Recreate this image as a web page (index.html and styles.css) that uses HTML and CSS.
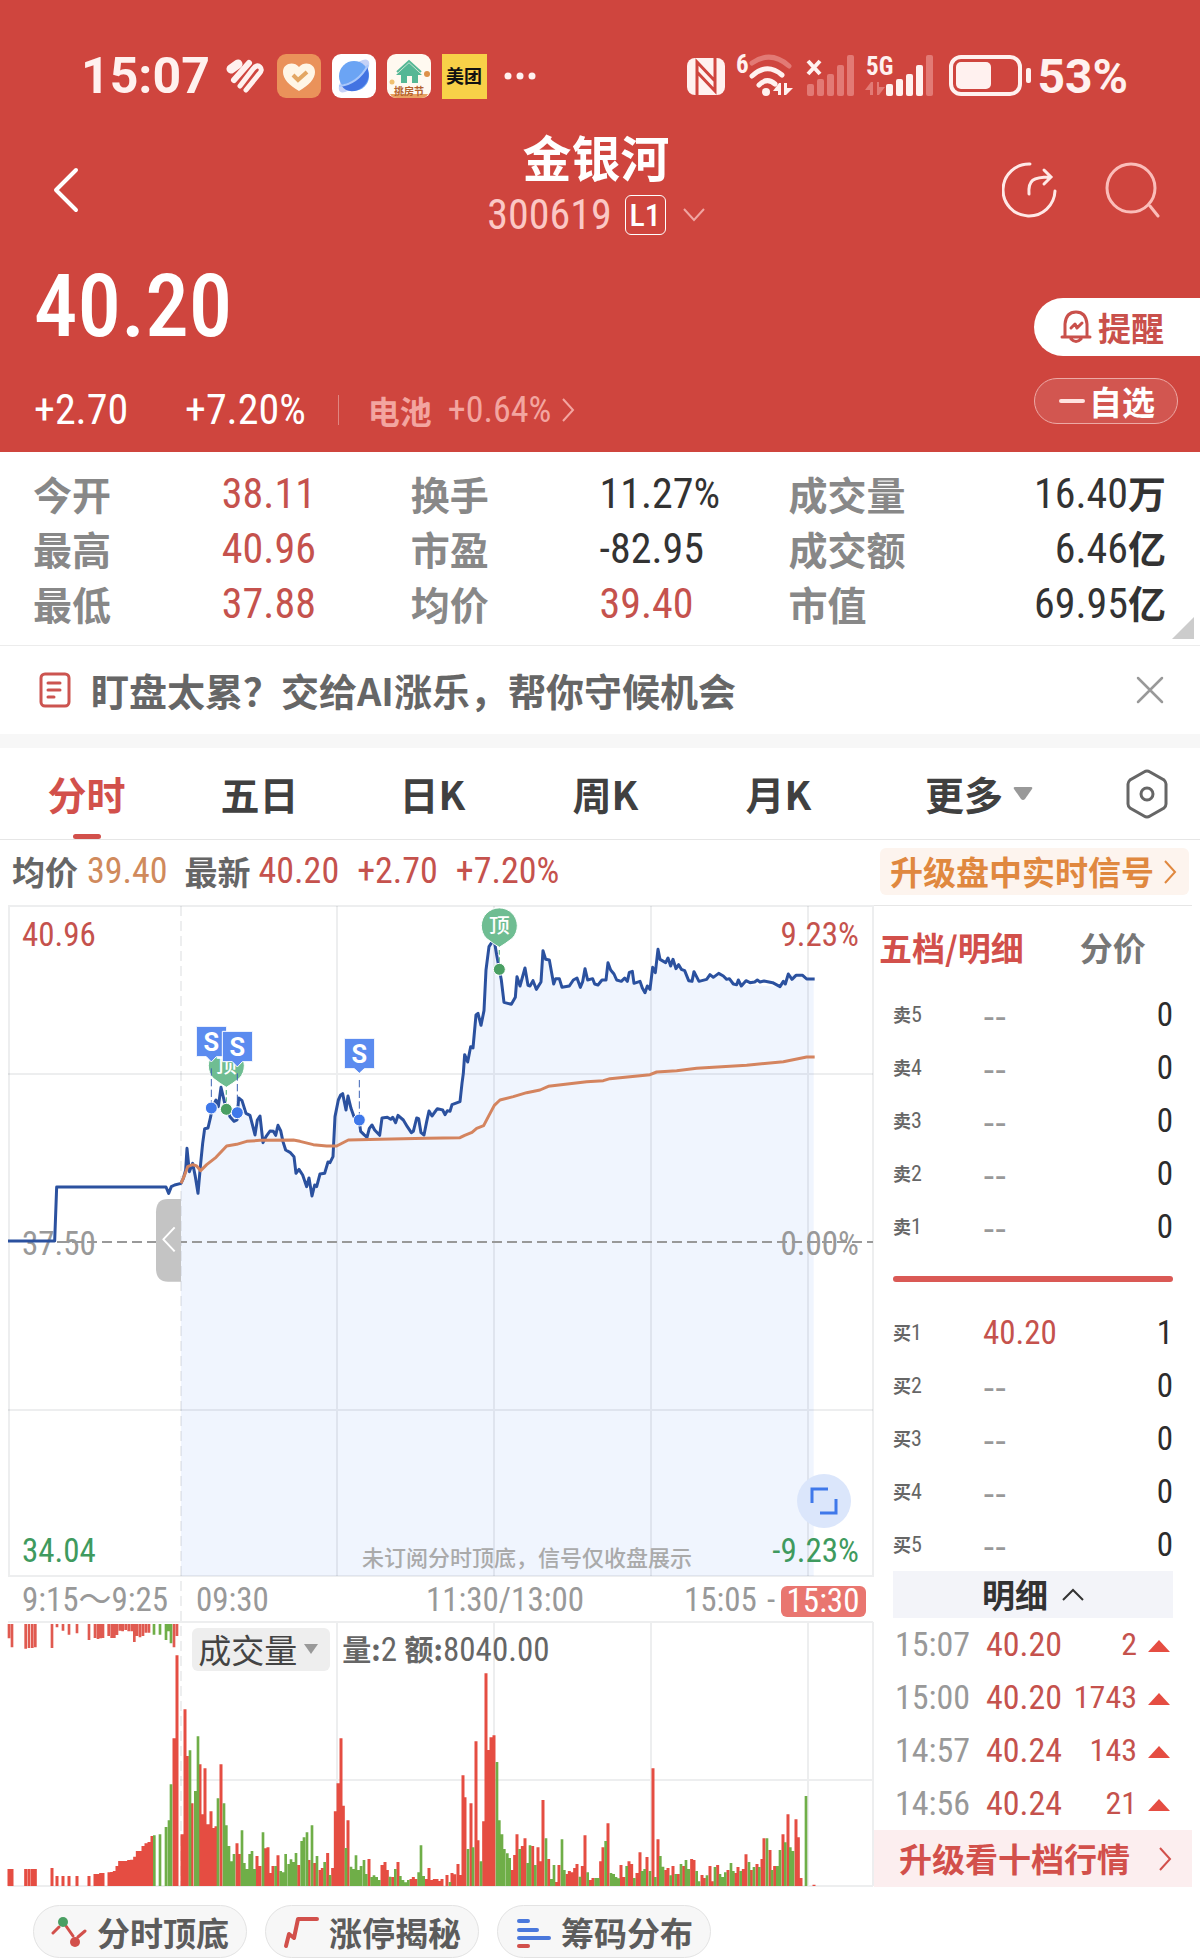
FILE: index.html
```html
<!DOCTYPE html>
<html lang="zh-CN">
<head>
<meta charset="utf-8">
<meta name="viewport" content="width=device-width, initial-scale=1">
<title>金银河 300619</title>
<link rel="stylesheet" href="styles.css">
</head>
<body>
<header class="hero">
  <div class="status">
    <span class="clock">15:07</span>
    <svg class="s-heart" width="40" height="45" viewBox="0 0 40 45" fill="none" stroke="#fff1ef" stroke-linecap="round"><path d="M5 15L12 10" stroke-width="9"/><path d="M8 26L23 9" stroke-width="6"/><path d="M14 32L27 15Q31 10 34 13Q37 16 33 20L20 36" stroke-width="5"/></svg>
    <svg class="s-app" width="44" height="45" viewBox="0 0 44 45"><rect width="44" height="44" rx="9" fill="#ea925a"/><path d="M22 37C12 31 6 25 6 18C6 9 17 7 22 13C27 7 38 9 38 18C38 25 32 31 22 37Z" fill="#fff6e6"/><path d="M16 21L21 26L30 18" fill="none" stroke="#e3a763" stroke-width="4"/></svg>
    <svg class="s-app" width="44" height="45" viewBox="0 0 44 45"><rect width="44" height="44" rx="9" fill="#fff"/><ellipse cx="22" cy="22" rx="21" ry="8" fill="#c5d2f7" transform="rotate(-48 22 22)"/><circle cx="22" cy="22" r="15" fill="#6ba4f4"/><path d="M9 31Q28 27 35 12Q41 28 26 36Q15 40 9 31Z" fill="#4273e2"/><path d="M7 32Q26 30 36 11" stroke="#a9c8fb" stroke-width="2" fill="none"/></svg>
    <svg class="s-app" width="44" height="45" viewBox="0 0 44 45"><rect width="44" height="44" rx="9" fill="#fff9f0"/><path d="M3 40H41Q39 44 34 44H10Q5 44 3 40Z" fill="#e8a060"/><path d="M22 9L35 21H31V29H25V22H20V29H14V21H9Z" fill="#55b795"/><path d="M10 18L22 7L34 18" fill="none" stroke="#55b795" stroke-width="2"/><circle cx="40" cy="20" r="3" fill="#de9149"/><circle cx="5" cy="28" r="2.500" fill="#f0c070"/><text x="22" y="41" text-anchor="middle" class="tiny-label" fill="#b4622f">挑房节</text></svg>
    <svg class="s-app" width="45" height="45" viewBox="0 0 45 45"><rect width="45" height="45" fill="#f8d148"/><text x="22" y="29" text-anchor="middle" class="app-label">美团</text></svg>
    <svg class="s-dots" width="34" height="45" viewBox="0 0 34 45" fill="#fff1ef"><circle cx="5" cy="22" r="3.500"/><circle cx="17" cy="22" r="3.500"/><circle cx="29" cy="22" r="3.500"/></svg>
    <svg class="s-radio" width="346" height="61" viewBox="689 46 346 61" fill="#fff1ef">
      <rect x="689" y="58" width="38" height="37" rx="8"/>
      <path d="M699 95V62L717 81V72M717 58V91L699 72V81" fill="none" stroke="#cf453e" stroke-width="3"/>
      <text x="738" y="73" class="radio-label">6</text>
      <g fill="none" stroke="#fff1ef" stroke-width="5" stroke-linecap="round"><path d="M754 63Q773 50 791 66" stroke="#e27a75"/><path d="M754 76Q769 62 784 75"/><path d="M761 85Q769 77 777 84"/></g>
      <circle cx="768" cy="92" r="4"/><path d="M775 91L781 83H783V95H780V91ZM786 83H789V88L795 88L788 95H786Z"/>
      <path d="M810 61L822 74M822 61L810 74" stroke="#fff1ef" stroke-width="4"/>
      <g fill="#e27a75"><rect x="809" y="84" width="7" height="12" rx="2"/><rect x="819" y="79" width="7" height="17" rx="2"/><rect x="829" y="74" width="7" height="22" rx="2"/><rect x="839" y="65" width="7" height="31" rx="2"/><rect x="849" y="55" width="7" height="41" rx="2"/><path d="M867 90L873 82H875V95H872V90ZM879 82H881V87H887L881 95H879Z"/><rect x="928" y="55" width="7" height="41" rx="2"/></g>
      <text x="868" y="75" class="radio-label">5G</text>
      <rect x="888" y="84" width="7" height="12" rx="2"/><rect x="898" y="79" width="7" height="17" rx="2"/><rect x="908" y="74" width="7" height="22" rx="2"/><rect x="918" y="65" width="7" height="31" rx="2"/>
      <rect x="953" y="57" width="69" height="37" rx="10" fill="none" stroke="#fff1ef" stroke-width="4"/><rect x="958" y="62" width="35" height="27" rx="5"/><rect x="1028" y="68" width="5" height="15" rx="2"/>
    </svg>
    <span class="battery">53%</span>
  </div>

  <nav class="nav">
    <button class="back" aria-label="返回"><svg width="44" height="56" viewBox="0 0 44 56" fill="none" stroke="#fff" stroke-width="4" stroke-linecap="round" stroke-linejoin="round"><path d="M32 8L12 28L32 48"/></svg></button>
    <div class="title">
      <h1>金银河</h1>
      <div class="code"><span>300619</span><span class="level">L1</span><svg width="22" height="14" viewBox="0 0 22 14" fill="none" stroke="#f0a5a1" stroke-width="2"><path d="M1 1L11 12L21 1"/></svg></div>
    </div>
    <div class="nav-actions">
      <button aria-label="分享"><svg width="56" height="60" viewBox="0 0 56 60" fill="none" stroke="#ffe9e7" stroke-width="3" stroke-linecap="round"><path d="M28 4A26 26 0 1 0 53 31"/><path d="M27 34C26 20 31 17 48 17M42 10L49 17L42 24"/></svg></button>
      <button aria-label="搜索"><svg width="56" height="60" viewBox="0 0 56 60" fill="none" stroke="#fbbdb9" stroke-width="3" stroke-linecap="round"><circle cx="27" cy="28" r="24"/><path d="M46 46L54 56"/></svg></button>
    </div>
  </nav>

  <section class="quote">
    <div>
      <div class="price">40.20</div>
      <div class="change">
        <span class="delta">+2.70</span><span>+7.20%</span>
        <a class="sector" href="#"><b>电池</b><span>+0.64%</span><svg width="14" height="26" viewBox="0 0 14 26" fill="none" stroke="#f3a5a0" stroke-width="2"><path d="M2 2L12 13L2 24"/></svg></a>
      </div>
    </div>
    <div class="quote-actions">
      <button class="remind"><svg width="32" height="36" viewBox="0 0 32 36" fill="none" stroke="#c9504b" stroke-width="3" stroke-linecap="round" stroke-linejoin="round"><path d="M2 28H30M5 28V15Q6 3 16 3Q26 3 27 15V28M11 30Q16 35 21 30"/><path d="M11 19L15 15L17 19L22 14"/></svg>提醒</button>
      <button class="watch"><svg width="26" height="4" viewBox="0 0 26 4"><rect width="26" height="4" rx="2" fill="#ffe3e0"/></svg>自选</button>
    </div>
  </section>
</header>

<section class="stats">
  <table>
    <colgroup><col class="c1"><col class="c2"><col class="c3"><col class="c4"><col class="c5"><col></colgroup>
    <tr><th>今开</th><td class="up">38.11</td><th>换手</th><td>11.27%</td><th>成交量</th><td class="end">16.40<b>万</b></td></tr>
    <tr><th>最高</th><td class="up">40.96</td><th>市盈</th><td>-82.95</td><th>成交额</th><td class="end">6.46<b>亿</b></td></tr>
    <tr><th>最低</th><td class="up">37.88</td><th>均价</th><td class="up">39.40</td><th>市值</th><td class="end">69.95<b>亿</b></td></tr>
  </table>
  <i class="corner"></i>
</section>

<aside class="notice">
  <svg width="32" height="36" viewBox="0 0 32 36" fill="none" stroke="#cc5450" stroke-width="3" stroke-linecap="round"><rect x="2" y="2" width="28" height="32" rx="4"/><path d="M9 11H21M9 18H21M9 25H15"/></svg>
  <p>盯盘太累？交给AI涨乐，帮你守候机会</p>
  <button aria-label="关闭"><svg width="28" height="28" viewBox="0 0 28 28" stroke="#999" stroke-width="2.500" stroke-linecap="round"><path d="M2 2L26 26M26 2L2 26"/></svg></button>
</aside>

<nav class="tabs">
  <button class="active">分时</button><button>五日</button><button>日K</button><button>周K</button><button>月K</button>
  <button>更多<svg width="20" height="14" viewBox="0 0 20 14"><path d="M2 0H18Q20 0 19 2L12 12Q10 14 8 12L1 2Q0 0 2 0Z" fill="#999"/></svg></button>
  <button aria-label="设置"><svg width="42" height="50" viewBox="0 0 42 50" fill="none" stroke="#666" stroke-width="3"><path d="M18 3Q21 1 24 3L38 11Q40 13 40 15V35Q40 37 38 39L24 47Q21 49 18 47L4 39Q2 37 2 35V15Q2 13 4 11Z"/><circle cx="21" cy="25" r="6"/></svg></button>
</nav>

<section class="info">
  <p><b>均价</b><span class="avg">39.40</span><b class="latest">最新</b><span class="up">40.20</span><span class="up gap">+2.70</span><span class="up gap">+7.20%</span></p>
  <a class="signal" href="#">升级盘中实时信号<svg width="14" height="26" viewBox="0 0 14 26" fill="none" stroke="#e0883f" stroke-width="2"><path d="M2 2L12 13L2 24"/></svg></a>
</section>

<main class="board">
  <section class="chart">
    <svg class="plot" viewBox="0 905 874 982" role="img" aria-label="分时走势">
      <g transform="translate(0 900) scale(.33333)">
        <path fill="#f0f5fe" d="M543 2028V850L550 835L561 745L568 815L578 790L586 830L594 880L602 790L614 686L624 684L632 650L636 625L648 600L655 620L663 562L672 600L680 630L690 650L702 664L711 660L716 594L738 640L750 646L765 705L780 648L789 728L810 693L834 676L849 725L857 750L882 770L888 820L920 860L936 888L960 822L984 786L999 770L1005 650L1015 600L1028 581L1038 630L1044 588L1053 625L1078 660L1082 694L1101 712L1116 675L1139 706L1146 654L1194 646L1234 698L1250 654L1272 705L1287 633L1312 626L1335 642L1356 614L1380 605L1394 464L1403 486L1419 444L1428 345L1443 376L1452 332L1458 210L1467 140L1483 122L1498 208L1512 307L1534 313L1546 292L1551 230L1560 258L1575 204L1584 256L1609 268L1623 246L1629 152L1648 180L1661 252L1678 236L1686 262L1731 234L1741 262L1755 206L1763 240L1794 255L1818 240L1824 188L1850 240L1882 244L1897 214L1902 250L1920 244L1935 278L1950 268L1958 202L1966 218L1974 148L1980 178L2054 212L2066 242L2082 215L2097 244L2156 220L2200 252L2340 260L2365 222L2408 226L2441 237V2028Z"/>
      </g>
      <g class="grid">
        <path d="M8 1074H873M8 1410H873M337 906V1576M494 906V1576M651 906V1576M808 906V1576"/>
        <path d="M8 1622H873M180 1780H873M8 1886H873M337 1622V1886M494 1622V1886M651 1622V1886M808 1622V1886M873 1622V1886"/>
        <path d="M8 906H874M9 906V1577M873 906V1577M8 1576H874"/>
        <path d="M181 906V1886" stroke-dasharray="10 5"/>
      </g>
      <path d="M57 1242H873" stroke="#999" stroke-width="2" stroke-dasharray="10 5"/>
      <g class="label">
        <text x="22" y="946" fill="#c5524d">40.96</text><text x="859" y="946" text-anchor="end" fill="#c5524d">9.23%</text>
        <text x="22" y="1255" fill="#999">37.50</text><text x="859" y="1255" text-anchor="end" fill="#999">0.00%</text>
        <text x="22" y="1562" fill="#3f9a5e">34.04</text><text x="859" y="1562" text-anchor="end" fill="#3f9a5e">-9.23%</text>
      </g>
      <text x="362" y="1566" class="hint">未订阅分时顶底，信号仅收盘展示</text>
      <g class="label" fill="#999">
        <text x="22" y="1611">9:15～9:25</text><text x="196" y="1611">09:30</text><text x="505" y="1611" text-anchor="middle">11:30/13:00</text><text x="684" y="1611">15:05</text><text x="767" y="1611">-</text>
        <rect x="781" y="1586" width="85" height="31" rx="6" fill="#e97670"/><text x="823" y="1612" text-anchor="middle" fill="#fff">15:30</text>
      </g>
      <g transform="translate(0 900) scale(.33333)" stroke-linejoin="round">
        <path fill="#c4c4c4" d="M543 897V1145H504Q468 1145 468 1105V937Q468 897 504 897Z"/>
        <path d="M524 982L490 1018L524 1054" fill="none" stroke="#fff" stroke-width="6"/>
        <path class="price-line" d="M24 1023H164L170 861H498L506 880L514 860L524 855L543 850L550 835L557 810L561 745L568 815L578 790L586 830L594 880L602 790L608 730L614 686L624 684L632 650L636 625L648 600L655 620L663 562L672 600L680 630L690 650L702 664L711 660L716 594L726 602L738 640L750 646L765 705L772 660L780 648L789 728L798 710L810 693L820 694L827 706L834 676L842 692L849 725L857 750L870 757L882 770L888 820L897 808L908 825L920 860L927 834L936 888L944 855L950 860L960 822L974 820L984 786L990 788L999 770L1005 650L1015 600L1022 585L1028 581L1038 630L1044 588L1053 625L1062 650L1078 665L1082 694L1092 704L1101 712L1108 685L1116 675L1124 690L1139 706L1146 654L1162 652L1172 658L1178 652L1187 668L1194 646L1210 660L1222 680L1234 698L1240 694L1250 654L1256 656L1263 698L1272 705L1280 665L1287 633L1296 648L1312 626L1328 630L1335 644L1342 632L1350 634L1356 614L1380 605L1386 550L1390 520L1394 464L1403 486L1412 440L1419 444L1428 345L1434 340L1443 376L1452 332L1458 210L1467 140L1475 128L1483 122L1490 165L1498 208L1504 240L1512 307L1534 313L1546 292L1551 230L1560 258L1575 204L1584 256L1590 258L1599 242L1609 268L1623 246L1629 152L1637 178L1648 180L1661 252L1667 236L1678 236L1686 262L1708 258L1720 240L1731 234L1741 262L1748 245L1755 206L1763 240L1778 236L1784 252L1794 255L1806 240L1818 240L1824 188L1832 210L1842 222L1850 240L1864 244L1874 234L1882 244L1888 217L1897 214L1902 250L1920 244L1927 264L1935 278L1942 258L1950 268L1958 202L1966 218L1974 148L1980 178L1997 188L2004 174L2012 198L2019 178L2028 206L2036 194L2044 208L2054 212L2066 242L2076 244L2082 215L2097 244L2120 238L2130 224L2140 232L2156 220L2170 228L2180 238L2188 236L2200 252L2210 254L2215 240L2224 258L2238 242L2250 248L2264 246L2272 240L2280 246L2292 243L2318 248L2340 260L2350 244L2356 252L2365 222L2376 238L2388 226L2408 226L2420 237H2444"/>
        <path class="avg-line" d="M543 850L552 830L563 800L578 794L590 798L602 812L620 794L648 772L680 738L710 733L740 724L780 721L880 720L900 724L940 734L980 738L1010 738L1045 720L1140 718L1280 715L1380 713L1394 706L1416 697L1430 685L1451 677L1467 646L1483 616L1500 600L1540 590L1580 578L1620 570L1645 559L1760 545L1810 542L1830 536L1950 524L1970 516L2030 512L2090 505L2240 496L2350 485L2420 471H2444"/>
        <g id="top-pin">
          <path d="M1459 115A54 54 0 1 1 1537 115Q1515 132 1498 142Q1481 132 1459 115Z" fill="#6fbd92" stroke="#fff" stroke-width="3"/>
          <text x="1498" y="99" text-anchor="middle" class="pin-text">顶</text>
          <path d="M1498 150V185" stroke="#6fbd92" stroke-width="4" stroke-dasharray="14 8"/>
          <circle cx="1498" cy="208" r="18" fill="#4a9f63" stroke="#fff" stroke-width="3"/>
        </g>
        <use href="#top-pin" x="-819" y="420"/>
        <g stroke="#3c62b5" stroke-width="3" stroke-dasharray="22 10"><path d="M634 505V610M712 520V620M1078 540V645"/></g>
        <g class="sell">
          <path d="M589 379H680V470H649L634 486L619 470H589Z"/><text x="634" y="453" text-anchor="middle">S</text><circle cx="634" cy="624" r="18"/>
          <path d="M667 394H758V485H727L712 501L697 485H667Z"/><text x="712" y="468" text-anchor="middle">S</text><circle cx="712" cy="638" r="18"/>
          <path d="M1033 415H1124V506H1093L1078 520L1063 506H1033Z"/><text x="1078" y="489" text-anchor="middle">S</text><circle cx="1078" cy="660" r="18"/>
        </g>
      </g>
      <g transform="translate(0 1560) scale(.33333)" fill="none" stroke-width="9">
        <path stroke="#e54d42" d="M27 978V927M36 978V927M77 978V927M87 978V927M97 978V927M106 978V927M156 978V924M171 978V948M189 978V948M207 978V948M231 978V948M267 978V948M285 978V942M294 978V942M302 978V939M309 978V939M327 978V937M335 978V936M343 978V933M351 978V918M359 978V903M368 978V903M377 978V903M386 978V900M395 978V899M404 978V890M412 978V873M420 978V873M429 978V858M438 978V850M447 978V846M456 978V828M522 978V535M531 978V286M546 978V823M555 978V448M562 978V588M576 978V730M600 978V613M608 978V763M615 978V625M624 978V793M633 978V754M641 978V804M648 978V799M663 978V613M711 978V850M718 978V882M771 978V888M780 978V918M796 978V865M804 978V862M812 978V939M819 978V918M834 978V886M896 978V915M927 978V900M944 978V909M960 978V930M967 978V924M983 978V879M998 978V924M1006 978V754M1014 978V670M1023 978V535M1030 978V737M1044 978V781M1107 978V897M1146 978V915M1155 978V906M1162 978V930M1178 978V951M1194 978V906M1233 978V957M1240 978V951M1248 978V957M1279 978V957M1287 978V924M1295 978V960M1303 978V957M1311 978V957M1319 978V963M1326 978V957M1341 978V945M1356 978V939M1364 978V943M1374 978V912M1381 978V945M1389 978V646M1395 978V712M1413 978V730M1428 978V544M1434 978V841M1451 978V784M1458 978V340M1467 978V570M1473 978V532M1482 978V526M1536 978V930M1544 978V885M1551 978V823M1567 978V858M1575 978V835M1598 978V858M1614 978V862M1622 978V904M1629 978V720M1646 978V897M1669 978V966M1677 978V915M1701 978V942M1708 978V933M1716 978V937M1724 978V924M1731 978V912M1747 978V918M1755 978V826M1771 978V960M1779 978V954M1802 978V904M1809 978V862M1824 978V790M1863 978V915M1872 978V951M1887 978V904M1895 978V912M1911 978V939M1920 978V877M1941 978V891M1959 978V625M1974 978V838M1997 978V930M2004 978V924M2019 978V918M2035 978V942M2051 978V918M2075 978V897M2082 978V900M2106 978V945M2113 978V954M2130 978V918M2137 978V964M2153 978V915M2184 978V930M2207 978V939M2214 978V921M2230 978V927M2238 978V883M2254 978V930M2271 978V912M2286 978V897M2292 978V835M2310 978V870M2324 978V918M2349 978V823M2364 978V763M2388 978V778M2395 978V832M2403 978V954M2442 978V974"/>
        <path stroke="#6fae48" stroke-width="8" d="M463 978V826M480 978V823M498 978V801M507 978V781M513 978V673M570 978V571M586 978V693M594 978V529M654 978V715M672 978V730M679 978V796M687 978V858M694 978V904M702 978V882M726 978V811M733 978V909M741 978V927M749 978V882M756 978V873M764 978V927M789 978V817M827 978V918M842 978V933M850 978V937M857 978V882M866 978V912M873 978V898M881 978V906M888 978V879M905 978V843M912 978V832M921 978V817M936 978V796M951 978V888M974 978V906M990 978V945M1038 978V864M1053 978V920M1061 978V927M1068 978V886M1076 978V930M1083 978V918M1092 978V900M1099 978V942M1115 978V951M1122 978V946M1130 978V951M1138 978V960M1170 978V950M1186 978V927M1201 978V948M1209 978V960M1217 978V967M1225 978V960M1256 978V937M1263 978V856M1271 978V948M1350 978V966M1404 978V867M1419 978V862M1443 978V904M1491 978V606M1498 978V781M1506 978V823M1513 978V867M1522 978V880M1529 978V894M1559 978V867M1583 978V909M1590 978V856M1606 978V915M1638 978V835M1654 978V957M1662 978V915M1686 978V838M1693 978V930M1740 978V950M1763 978V937M1787 978V954M1795 978V954M1817 978V843M1833 978V939M1841 978V942M1848 978V951M1856 978V955M1880 978V918M1903 978V954M1926 978V933M1934 978V927M1950 978V933M1966 978V951M1981 978V888M1989 978V920M2012 978V946M2027 978V942M2043 978V912M2058 978V900M2066 978V927M2090 978V933M2097 978V964M2121 978V946M2145 978V921M2160 978V942M2168 978V951M2176 978V937M2193 978V909M2200 978V933M2222 978V933M2247 978V906M2262 978V921M2278 978V921M2301 978V835M2316 978V930M2332 978V918M2340 978V870M2356 978V847M2371 978V862M2379 978V873M2418 978V708"/>
        <path stroke="#e05a50" stroke-width="8" d="M27 192V235M36 192V262M77 192V266M87 192V264M97 192V264M106 192V262M156 192V264M171 192V202M189 192V212M207 192V224M231 192V220M267 192V240M285 192V234M294 192V237M302 192V235M309 192V234M326 192V228M335 192V234M343 192V234M351 192V225M360 192V212M368 192V214M377 192V210M386 192V214M395 192V214M403 192V246M411 192V228M420 192V232M429 192V228M438 192V218M447 192V218M522 192V262M531 192V228"/>
        <path stroke="#6fae48" stroke-width="8" d="M462 192V224M480 192V224M498 192V240M506 192V214M513 192V250"/>
      </g>
    </svg>
    <button class="expand" aria-label="全屏"><svg width="30" height="30" viewBox="0 0 30 30" fill="none" stroke="#3f78ea" stroke-width="3"><path d="M3 17V3H19M27 13V27H11"/></svg></button>
    <div class="volume-bar">
      <span class="picker"><select aria-label="副图指标"><option>成交量</option></select><svg width="14" height="10" viewBox="0 0 14 10"><path d="M0 0H14L7 10Z" fill="#999"/></svg></span>
      <p><b>量:</b>2 <b>额:</b>8040.00</p>
    </div>
  </section>

  <aside class="side">
    <div class="side-tabs"><button class="active">五档/明细</button><button>分价</button></div>
    <table class="book">
      <colgroup><col class="b1"><col class="b2"><col></colgroup>
      <tr><th><b>卖</b>5</th><td class="nil">--</td><td>0</td></tr>
      <tr><th><b>卖</b>4</th><td class="nil">--</td><td>0</td></tr>
      <tr><th><b>卖</b>3</th><td class="nil">--</td><td>0</td></tr>
      <tr><th><b>卖</b>2</th><td class="nil">--</td><td>0</td></tr>
      <tr><th><b>卖</b>1</th><td class="nil">--</td><td>0</td></tr>
    </table>
    <hr class="split">
    <table class="book">
      <colgroup><col class="b1"><col class="b2"><col></colgroup>
      <tr><th><b>买</b>1</th><td class="up">40.20</td><td>1</td></tr>
      <tr><th><b>买</b>2</th><td class="nil">--</td><td>0</td></tr>
      <tr><th><b>买</b>3</th><td class="nil">--</td><td>0</td></tr>
      <tr><th><b>买</b>4</th><td class="nil">--</td><td>0</td></tr>
      <tr><th><b>买</b>5</th><td class="nil">--</td><td>0</td></tr>
    </table>
    <button class="detail-head">明细<svg width="22" height="14" viewBox="0 0 22 14" fill="none" stroke="#333" stroke-width="2"><path d="M1 12L11 2L21 12"/></svg></button>
    <table class="ticks">
      <colgroup><col class="t1"><col class="t2"><col><col class="t4"></colgroup>
      <tr><th>15:07</th><td>40.20</td><td>2</td><td><i class="tri"></i></td></tr>
      <tr><th>15:00</th><td>40.20</td><td>1743</td><td><i class="tri"></i></td></tr>
      <tr><th>14:57</th><td>40.24</td><td>143</td><td><i class="tri"></i></td></tr>
      <tr><th>14:56</th><td>40.24</td><td>21</td><td><i class="tri"></i></td></tr>
    </table>
    <a class="upgrade" href="#">升级看十档行情<svg width="14" height="26" viewBox="0 0 14 26" fill="none" stroke="#d2504b" stroke-width="2"><path d="M2 2L12 13L2 24"/></svg></a>
  </aside>
</main>

<footer class="chips">
  <button><svg width="36" height="36" viewBox="0 0 36 36" fill="none" stroke="#d2504b" stroke-width="3" stroke-linecap="round"><path d="M2 19L8 13M15 12L22 22M27 23L34 17"/><circle cx="12" cy="8" r="5" fill="#4a9f63" stroke="none"/><circle cx="24" cy="28" r="5" fill="#d2504b" stroke="none"/></svg>分时顶底</button>
  <button><svg width="36" height="36" viewBox="0 0 36 36" fill="none" stroke="#d2504b" stroke-width="4" stroke-linecap="round" stroke-linejoin="round"><path d="M3 32L6 20L11 24L15 5H34"/></svg>涨停揭秘</button>
  <button><svg width="36" height="36" viewBox="0 0 36 36" fill="none" stroke="#4a78dc" stroke-width="4" stroke-linecap="round"><path d="M4 7H13M4 16H22M4 24H34"/><path d="M4 32H13" stroke="#d2504b"/></svg>筹码分布</button>
</footer>
</body>
</html>
```
FILE: styles.css
```css
* { box-sizing: border-box; }
body {
  margin: 0;
  background: #fff;
  color: #333;
  font-family: "Roboto Condensed", "Noto Sans CJK SC", sans-serif;
}
button {
  display: flex;
  align-items: center;
  justify-content: center;
  padding: 0;
  border: 0;
  background: none;
  color: inherit;
  font: inherit;
}
a { color: inherit; text-decoration: none; }
b, h1, th { font-family: "Noto Sans CJK SC", sans-serif; font-weight: 700; }
p, h1 { margin: 0; }
svg { display: block; flex: none; }
table { width: 100%; border-collapse: collapse; table-layout: fixed; }
th, td { padding: 0; text-align: left; white-space: nowrap; }
.up { color: #c5524d; }

/* header */
.hero { background: #cf453e; color: #fff; }
.status {
  display: flex;
  align-items: center;
  padding: 46px 72px 0 81px;
  color: #fff1ef;
  font-family: Roboto, sans-serif;
  font-weight: 700;
  line-height: 45px;
}
.clock { font-size: 50px; }
.battery { margin-left: 4px; font-size: 48px; }
.s-heart { margin-left: 16px; }
.s-app { margin-left: 11px; }
.s-dots { margin-left: 16px; }
.s-radio { margin-left: auto; }
.tiny-label { font: 700 10px "Noto Sans CJK SC", sans-serif; }
.app-label { font: 700 18px "Noto Sans CJK SC", sans-serif; fill: #111; }
.radio-label { font: 700 25px "Roboto Condensed", sans-serif; }
.nav {
  display: grid;
  grid-template-columns: 1fr auto 1fr;
  align-items: center;
  margin-top: 28px;
  padding: 0 40px 0 44px;
}
.back { justify-self: start; }
.title { padding: 0 12px 10px 0; text-align: center; }
.title h1 { font-size: 49px; line-height: 42px; }
.code {
  display: flex;
  align-items: center;
  justify-content: center;
  margin-top: 18px;
  color: #fbc8c5;
  font-size: 42px;
  line-height: 40px;
}
.level {
  width: 41px;
  margin: 0 17px 0 13px;
  border: 1px solid #fff;
  border-radius: 6px;
  color: #fff;
  font: 500 32px/38px "Roboto Condensed", sans-serif;
}
.nav-actions { display: flex; justify-content: flex-end; gap: 46px; }
.quote { display: flex; justify-content: space-between; padding: 0 0 19px 34px; }
.price { font-size: 87px; font-weight: 500; line-height: 122px; }
.change { display: flex; align-items: center; margin-top: 20px; font-size: 42px; line-height: 46px; }
.delta { width: 151px; }
.sector {
  display: flex;
  align-items: center;
  margin-left: 32px;
  padding-left: 29px;
  border-left: 1px solid #e08681;
  color: #f3a5a0;
  font-size: 36px;
  line-height: 30px;
}
.sector b { width: 80px; font-size: 32px; }
.sector svg { margin-left: 10px; }
.quote-actions { display: flex; flex-direction: column; align-items: flex-end; gap: 22px; padding-top: 53px; }
.remind {
  gap: 6px;
  padding: 0 36px 0 26px;
  border-radius: 29px 0 0 29px;
  background: #fff;
  color: #c9504b;
  font: 700 33px/58px "Noto Sans CJK SC", sans-serif;
}
.watch {
  gap: 4px;
  margin-right: 22px;
  padding: 0 22px 0 24px;
  border: 1px solid #eda9a5;
  border-radius: 23px;
  background: #d25650;
  font: 700 33px/44px "Noto Sans CJK SC", sans-serif;
}

/* key figures */
.stats { position: relative; padding: 14px 34px 14px 33px; border-bottom: 1px solid #ececec; }
.stats th { color: #888; font-size: 39px; line-height: 55px; }
.stats td { font-size: 42px; line-height: 55px; }
.stats td b { font-size: 38px; line-height: 38px; }
.stats .end { text-align: right; }
.c1, .c2, .c3, .c4 { width: 16.67%; }
.c5 { width: 13%; }
.corner {
  position: absolute;
  right: 6px;
  bottom: 6px;
  width: 22px;
  height: 22px;
  background: #ccc;
  clip-path: polygon(100% 0, 100% 100%, 0 100%);
}

/* notice */
.notice {
  display: flex;
  align-items: center;
  padding: 0 36px 0 39px;
  border-bottom: 14px solid #f7f7f7;
  color: #666;
  font: 700 38px/88px "Noto Sans CJK SC", sans-serif;
}
.notice p { flex: 1; padding-left: 20px; }

/* period tabs */
.tabs {
  display: grid;
  grid-template-columns: repeat(5, 173fr) 228fr 107fr;
  border-bottom: 1px solid #e6e6e6;
  color: #404040;
}
.tabs button { position: relative; font: 700 39px/91px "Noto Sans CJK SC", sans-serif; }
.tabs button svg { margin-left: 10px; }
.tabs button:last-child svg { margin: 0; }
.tabs .active { color: #d2504b; }
.tabs .active::after {
  content: "";
  position: absolute;
  bottom: 0;
  width: 28px;
  height: 5px;
  border-radius: 3px;
  background: #d2504b;
}

/* line above the chart */
.info { display: flex; align-items: center; justify-content: space-between; padding: 8px 11px 10px 12px; }
.info p { display: flex; align-items: center; font-size: 36px; line-height: 47px; }
.info b { color: #666; font-size: 33px; }
.avg { margin-left: 9px; color: #d08a5c; }
.latest { margin: 0 8px 0 17px; }
.gap { margin-left: 18px; }
.signal {
  display: flex;
  align-items: center;
  gap: 9px;
  padding: 0 12px 0 10px;
  border-radius: 6px;
  background: #fdf4ee;
  color: #e0883f;
  font: 700 33px/47px "Noto Sans CJK SC", sans-serif;
}

/* chart and order book */
.board { display: grid; grid-template-columns: 874fr 326fr; }
.chart { position: relative; }
.plot { width: 100%; height: auto; }
.grid { fill: none; stroke: #1e282f; stroke-opacity: .08; stroke-width: 2; }
.label { font-size: 33px; }
.hint { fill: #aaa; font: 500 22px "Noto Sans CJK SC", sans-serif; }
.price-line { fill: none; stroke: #2b519f; stroke-width: 9; }
.avg-line { fill: none; stroke: #d4845f; stroke-width: 9; }
.pin-text { fill: #fff; font: 500 62px "Noto Sans CJK SC", sans-serif; }
.sell path { fill: #5b8bef; stroke: #fff; stroke-width: 3; }
.sell circle { fill: #3f78ea; stroke: #fff; stroke-width: 3; }
.sell text { fill: #fff; font: 700 76px Roboto, sans-serif; }
.expand {
  position: absolute;
  right: 2.6%;
  bottom: 36.6%;
  width: 54px;
  height: 54px;
  border-radius: 50%;
  background: #dbe6fb;
}
.volume-bar { position: absolute; left: 22%; bottom: 22%; display: flex; align-items: center; gap: 12px; }
.picker { display: flex; align-items: center; padding-right: 12px; border-radius: 6px; background: #eee; }
.picker select {
  width: 112px;
  padding: 0 0 0 6px;
  border: 0;
  appearance: none;
  background: none;
  color: #444;
  font: 400 33px/43px "Noto Sans CJK SC", sans-serif;
}
.volume-bar p { color: #666; font-size: 33px; line-height: 43px; }
.volume-bar b { font-size: 29px; line-height: 33px; }

.side { margin-right: 8px; border-top: 1px solid #e6e6e6; }
.side-tabs { display: flex; gap: 56px; padding: 0 0 0 5px; color: #777; }
.side-tabs button { font: 700 33px/82px "Noto Sans CJK SC", sans-serif; }
.side-tabs .active { color: #d2504b; }
.book, .split, .detail-head, .ticks { width: 280px; margin-left: 19px; }
.book { font-size: 33px; line-height: 53px; }
.book th { color: #666; font: 400 22px/53px "Roboto Condensed", sans-serif; }
.book th b { font-size: 18px; line-height: 22px; }
.book td { color: #999; }
.book .nil { font: 500 33px/53px "Noto Sans CJK SC", sans-serif; }
.book td.up { color: #c5524d; }
.book td:last-child { color: #2c2c2c; text-align: right; }
.b1 { width: 90px; }
.b2 { width: 110px; }
.split { height: 6px; margin-top: 23px; margin-bottom: 24px; border: 0; border-radius: 3px; background: #da5955; }
.detail-head {
  gap: 14px;
  background: #f3f4f9;
  color: #333;
  font: 700 33px/47px "Noto Sans CJK SC", sans-serif;
}
.ticks { color: #c5524d; font-size: 34px; line-height: 53px; }
.ticks th { padding-left: 2px; color: #999; font: 400 34px/53px "Roboto Condensed", sans-serif; }
.ticks td:nth-child(3) { font-size: 32px; text-align: right; }
.ticks td:last-child { padding-right: 3px; text-align: right; }
.t1 { width: 93px; }
.t2 { width: 80px; }
.t4 { width: 36px; }
.tri {
  display: inline-block;
  width: 22px;
  height: 12px;
  background: #e54d42;
  clip-path: polygon(50% 0, 100% 100%, 0 100%);
  vertical-align: 4px;
}
.upgrade {
  display: flex;
  align-items: center;
  justify-content: space-between;
  padding: 0 20px 0 25px;
  background: #fceeef;
  color: #d2504b;
  font: 700 33px/57px "Noto Sans CJK SC", sans-serif;
}

/* tool chips, cut off by the bottom edge */
.chips { display: flex; gap: 18px; max-height: 71px; padding: 18px 33px 0; overflow: hidden; }
.chips button {
  flex: none;
  gap: 10px;
  padding: 0 17px;
  border: 1px solid #e3e3e3;
  border-radius: 30px;
  background: #f7f7f7;
  color: #5c5c5c;
  font: 700 33px/58px "Noto Sans CJK SC", sans-serif;
}
```
